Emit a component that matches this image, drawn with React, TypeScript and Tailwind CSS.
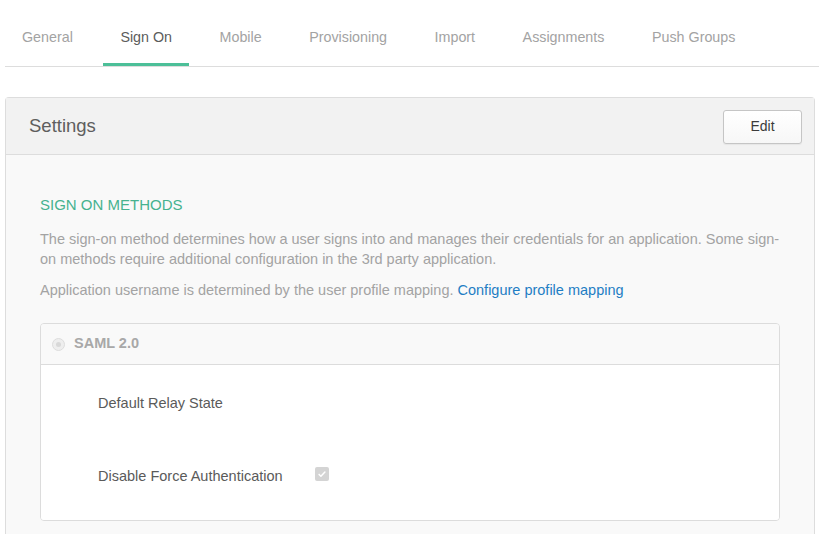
import React from 'react';

const tabs = ['General', 'Sign On', 'Mobile', 'Provisioning', 'Import', 'Assignments', 'Push Groups'];

const App: React.FC = () => {
  return (
    <div className="min-h-[534px] bg-white pl-[5px] font-['Liberation_Sans',Arial,sans-serif] text-[14.5px]">
      {/* Tabs */}
      <nav className="flex h-[67px] gap-[13.5px] border-b border-[#dddddd] text-[14.3px]">
        {tabs.map((tab) => (
          <div
            key={tab}
            className={`flex items-center px-[17px] pt-[12px] border-b-[3px] ${
              tab === 'Sign On' ? 'border-[#4cbf98] text-[#5c5c5c]' : 'border-transparent text-[#a3a3a3]'
            }`}
          >
            {tab}
          </div>
        ))}
      </nav>

      {/* Settings panel */}
      <div className="mt-[30px] mr-[4px] h-[440px] rounded-t-[4px] border border-b-0 border-[#dddddd] bg-[#f9f9f9]">
        <div className="flex h-[57px] items-center justify-between border-b border-[#dddddd] bg-[#f2f2f2] pl-[23px] pr-[12px]">
          <h2 className="text-[18.5px] text-[#5e5e5e]">Settings</h2>
          <button className="mt-[1px] h-[34px] w-[79px] rounded-[3px] border border-[#c5c5c5] bg-gradient-to-b from-white to-[#f7f7f7] text-[14px] text-[#3b3b3b] shadow-[0_1px_1px_rgba(0,0,0,0.05)]">
            Edit
          </button>
        </div>

        <div className="px-[34px] pt-[40px]">
          <h3 className="text-[15px] leading-[20px] text-[#46b28f]">SIGN ON METHODS</h3>
          <p className="mt-[14px] w-[740px] leading-[20px] text-[#a3a3a3]">
            The sign-on method determines how a user signs into and manages their credentials for an application. Some sign-on methods require additional configuration in the 3rd party application.
          </p>
          <p className="mt-[11px] leading-[20px] text-[#a3a3a3]">
            Application username is determined by the user profile mapping.{' '}
            <a className="text-[#1f7ec4]">Configure profile mapping</a>
          </p>

          {/* SAML box */}
          <div className="mt-[23px] w-[740px] overflow-hidden rounded-[4px] border border-[#dcdcdc]">
            <div className="flex h-[41px] items-center gap-[9px] border-b border-[#dcdcdc] bg-[#f9f9f9] pl-[11px]">
              <span className="h-[13px] w-[13px] rounded-full border border-[#dddddd] bg-[#eeeeee] p-[3px]">
                <span className="block h-full w-full rounded-full bg-[#d8d8d8]" />
              </span>
              <span className="font-bold text-[#a8a8a8]">SAML 2.0</span>
            </div>
            <div className="bg-white pb-[34px] pl-[57px] pt-[28px] text-[#5a5a5a]">
              <div className="leading-[20px]">Default Relay State</div>
              <div className="mt-[53px] flex items-center gap-[32px] leading-[20px]">
                <span>Disable Force Authentication</span>
                <span className="-mt-[5px] flex h-[14px] w-[14px] items-center justify-center rounded-[2px] bg-[#d4d4d4]">
                  <svg viewBox="0 0 12 12" className="h-[10px] w-[10px]" fill="none" stroke="#ffffff" strokeWidth={1.8} strokeLinecap="round" strokeLinejoin="round">
                    <path d="M2.5 6.5l2.2 2.2 4.8-5" />
                  </svg>
                </span>
              </div>
            </div>
          </div>
        </div>
      </div>
    </div>
  );
};

export default App;
